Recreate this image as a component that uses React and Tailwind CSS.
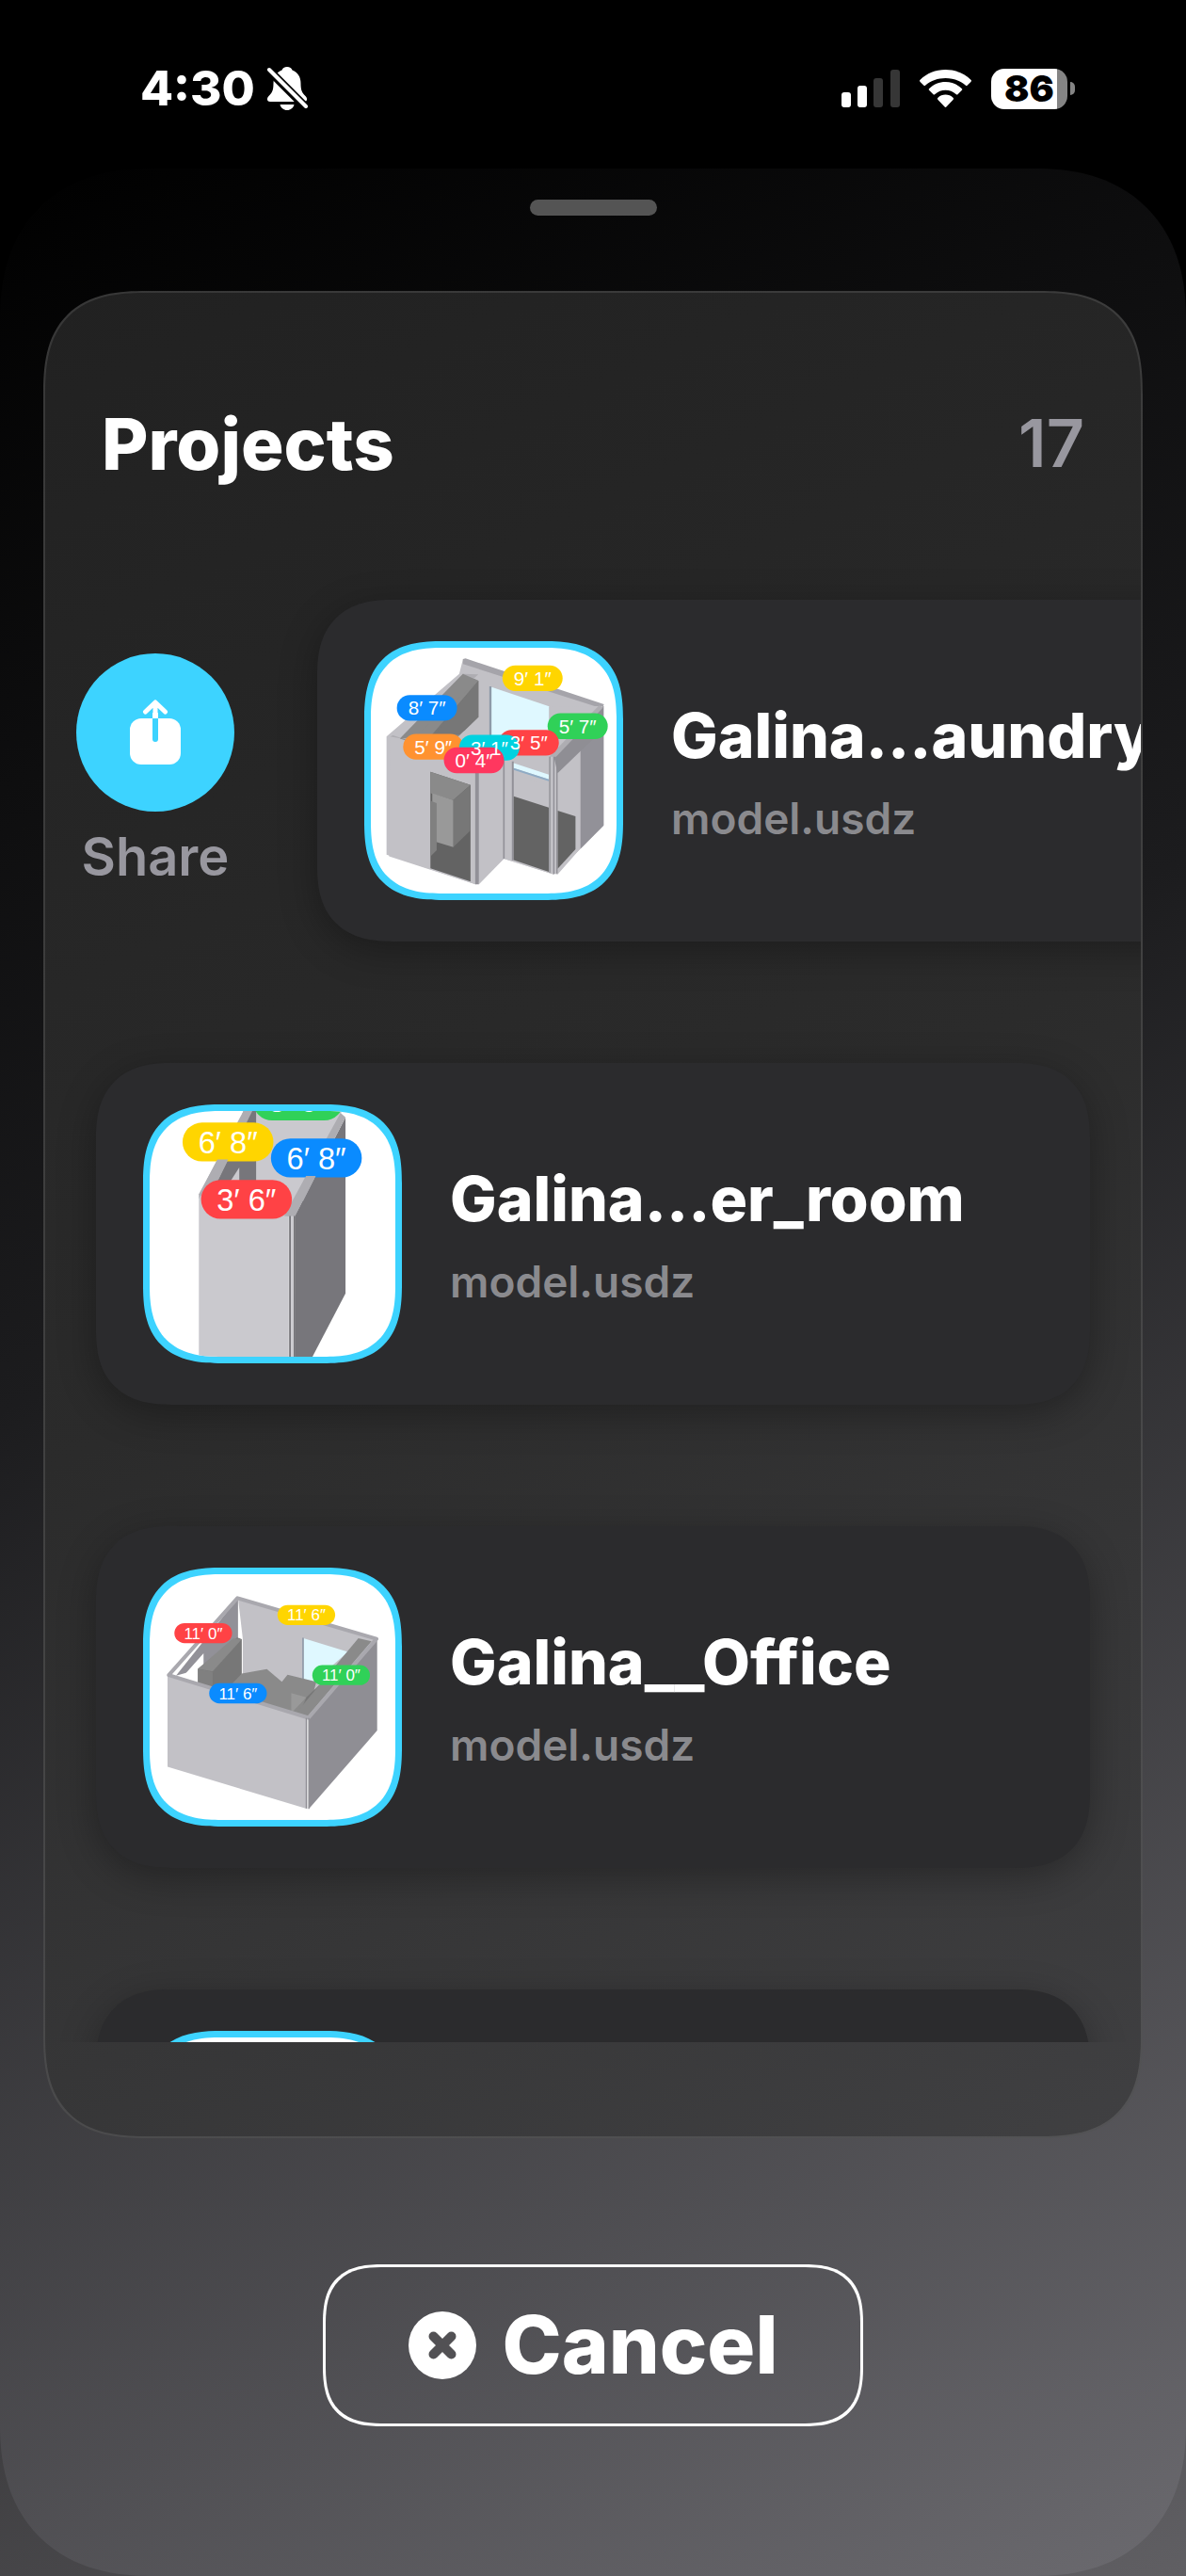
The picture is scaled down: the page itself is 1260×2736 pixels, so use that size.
import React from 'react';

const projects = [
  { name: 'Galina...aundry_room', file: 'model.usdz', Thumb: LaundryThumb, swiped: true },
  { name: 'Galina...er_room', file: 'model.usdz', Thumb: ShowerThumb },
  { name: 'Galina__Office', file: 'model.usdz', Thumb: OfficeThumb },
  { name: 'Galina__Room', file: 'model.usdz', Thumb: EmptyThumb },
];

export default function App() {
  return (
    <div className="min-h-screen bg-black font-['Inter',sans-serif] text-white">
      <div className="flex min-h-screen flex-col bg-linear-[155deg] from-black from-35% to-[#605f63]">
        <StatusBar />
        <main className="flex grow flex-col items-center rounded-[160px] bg-linear-[155deg] from-black via-[#1c1c1e] via-42% to-[#6b6a6f] px-[46px] pt-[33px] [corner-shape:superellipse(1.2)]">
          <div className="h-[17px] w-[135px] rounded-full bg-[#545454]" />
          <section className="mt-20 w-full rounded-[110px] border-2 border-white/10 bg-linear-[155deg] from-[#212121] via-[#2b2b2b] to-[#404042] bg-origin-border pb-[100px] [corner-shape:superellipse(1.4)]">
            <header className="flex items-center justify-between px-[60px] pt-28">
              <h1 className="text-[76px] leading-24 font-extrabold">Projects</h1>
              <span className="text-[70px] leading-24 font-semibold text-[#98979f]">17</span>
            </header>
            <ul className="mt-[60px] flex h-[1590px] flex-col gap-[129px] overflow-hidden pt-[58px]">
              {projects.map((p) => (
                <ProjectRow key={p.name} project={p} />
              ))}
            </ul>
          </section>
          <button className="mt-[134px] flex items-center gap-7 rounded-[64px] border-3 border-white px-[88px] py-[35px] text-[85px] leading-24 font-extrabold [corner-shape:superellipse(1.4)]">
            <CloseBadge />
            Cancel
          </button>
        </main>
      </div>
    </div>
  );
}

function ProjectRow({ project }) {
  const { name, file, Thumb, swiped } = project;
  return (
    <li className="flex shrink-0 items-center">
      {swiped && (
        <button className="ml-8 flex w-[170px] shrink-0 flex-col items-center gap-3 pt-0.5 text-[56px] leading-18 font-semibold text-[#98979f]">
          <span className="flex size-[168px] items-center justify-center rounded-full bg-[#3dd3ff]">
            <ShareIcon />
          </span>
          Share
        </button>
      )}
      <div
        className={`flex h-[363px] items-center gap-[51px] rounded-[80px] bg-[#2b2b2d] px-[50px] shadow-[0_10px_40px_rgba(0,0,0,0.3)] [corner-shape:superellipse(1.3)]
          ${swiped ? 'ml-[87px] w-[1056px] shrink-0' : 'mx-[54px] grow'}`}
      >
        <div className="size-[275px] shrink-0 overflow-hidden rounded-[84px] border-[7px] border-[#3dd3ff] bg-white [corner-shape:superellipse(1.4)]">
          <Thumb />
        </div>
        <div className="pt-1 whitespace-nowrap">
          <h2 className="text-[66px] leading-20 font-extrabold">{name}</h2>
          <p className="mt-4 text-[46px] leading-16 font-semibold text-[#8a8a8e]">{file}</p>
        </div>
      </div>
    </li>
  );
}

function StatusBar() {
  return (
    <div className="flex h-[179px] shrink-0 items-start justify-between bg-black pt-[62px] pr-[118px] pl-[149px]">
      <div className="flex h-16 items-center gap-3 text-[51px] font-extrabold">
        4:30
        <BellSlash />
      </div>
      <div className="flex h-16 items-center gap-[21px]">
        <svg className="h-10 w-[62px]" viewBox="0 0 62 40" fill="#fff">
          <rect x="0" y="24" width="10" height="16" rx="3" />
          <rect x="17" y="17" width="10" height="23" rx="3" />
          <rect x="34" y="9" width="10" height="31" rx="3" fill="#363636" />
          <rect x="52" y="0" width="10" height="40" rx="3" fill="#363636" />
        </svg>
        <svg className="h-10 w-[55px]" viewBox="0 0 55 40" fill="#fff">
          <path d="M27.5 0C17 0 7.500 4 .6 10.700a1.500 1.500 0 0 0 0 2.200l3.600 3.600a1.500 1.500 0 0 0 2.100 0C12 11.700 19.400 9 27.500 9s15.500 2.700 21.200 7.500a1.500 1.500 0 0 0 2.100 0l3.600-3.600a1.500 1.500 0 0 0 0-2.200C47.500 4 38 0 27.500 0Z" />
          <path d="M27.500 13c-6.600 0-12.600 2.700-17.200 6.900a1.500 1.500 0 0 0 0 2.200l4 4a1.500 1.500 0 0 0 2.100 0 16.500 16.500 0 0 1 22.200 0 1.500 1.500 0 0 0 2.100 0l4-4a1.500 1.500 0 0 0 0-2.200c-4.600-4.200-10.600-6.900-17.200-6.900Z" />
          <path d="M27.500 26.500c-3 0-5.900 1.200-8 3.200a1.500 1.500 0 0 0 0 2.200l6.900 7.400a1.500 1.500 0 0 0 2.200 0l6.900-7.400a1.500 1.500 0 0 0 0-2.200c-2.100-2-5-3.200-8-3.200Z" />
        </svg>
        <div className="flex items-center gap-[3px]">
          <div className="flex h-[43px] w-[81px] items-center justify-center rounded-[14px] bg-linear-to-r from-white from-87% to-[#848484] to-87% text-[39px] font-black text-black">
            86
          </div>
          <div className="h-[14px] w-[5px] rounded-r-full bg-[#848484]" />
        </div>
      </div>
    </div>
  );
}

function BellSlash() {
  return (
    <svg className="h-12 w-11" viewBox="0 0 44 48">
      <path
        d="M22 1c-2.800 0-4.800 1.500-5.500 3.500C10.500 7 7.500 12 7.500 18.500c0 7.500-1.500 10-5 13.500C0 34.500.5 38 4 38h36c3.500 0 4-3.500 1.500-6-3.500-3.500-5-6-5-13.500C36.500 12 33.500 7 27.500 4.500 26.800 2.500 24.800 1 22 1Z"
        fill="#fff"
      />
      <path d="M14.500 41h15c-.8 3.600-3.800 6-7.500 6s-6.700-2.400-7.500-6Z" fill="#fff" />
      <path d="M0 2l44 44" stroke="#000" strokeWidth="9" />
      <path d="M3 4l39 39" stroke="#fff" strokeWidth="4" strokeLinecap="round" />
    </svg>
  );
}

function ShareIcon() {
  return (
    <svg className="h-[70px] w-[54px]" viewBox="0 0 54 70" fill="none">
      <rect x="0" y="20" width="54" height="49" rx="12" fill="#fff" />
      <path d="M27 20v22" stroke="#3dd3ff" strokeWidth="6" strokeLinecap="round" />
      <path d="M24 14h6v6h-6z" fill="#fff" />
      <path d="M27 17V4M16.500 13 27 3l10.500 10" stroke="#fff" strokeWidth="5" strokeLinecap="round" strokeLinejoin="round" />
    </svg>
  );
}

function CloseBadge() {
  return (
    <svg className="size-[72px]" viewBox="0 0 72 72">
      <circle cx="36" cy="36" r="36" fill="#fff" />
      <path d="M26.500 26.500l19 19M45.500 26.500l-19 19" stroke="#525154" strokeWidth="10" strokeLinecap="round" />
    </svg>
  );
}

// dimension labels, each centred on x/y; the texts lie over all of the pills
function Tags({ w, h, size, items }) {
  return (
    <g>
      {items.map((t) => (
        <rect key={t.color} x={t.x - w / 2} y={t.y - h / 2} width={w} height={h} rx={h / 2} fill={t.color} />
      ))}
      {items.map((t) => (
        <text
          key={t.color}
          x={t.x}
          y={t.y + size * 0.36}
          textAnchor="middle"
          fontSize={size}
          fill="#fff"
          fontFamily="Liberation Sans, sans-serif"
        >
          {t.label}
        </text>
      ))}
    </g>
  );
}

function LaundryThumb() {
  return (
    <svg className="size-full" viewBox="72 82 784 784">
      <path d="M366 118l450 150v380l-75 75-85 82-160-50-90 82-284-95V365l232-200z" fill="#c2c1c6" />
      <path d="M366 118l8-2 442 146-6 14-444-142z" fill="#a5a4aa" />
      <path d="M366 165l49 22v116L300 415 165 372z" fill="#8a8a8a" />
      <path d="M415 187v116l-45 44-110 20z" fill="#777" />
      <path d="M133 365l10-4 40 14 232-208-49-2-200 206z" fill="#aeadb2" />
      <path d="M366 165l49 22-205 180-45 5z" fill="#8a8a8a" />
      <path d="M415 187v116l-60 57-80 0z" fill="#777" />
      <path d="M455 207l186 62v140H455z" fill="#dff8ff" />
      <path d="M450 205h7v160h-7z" fill="#8e9aa8" />
      <path d="M133 366l523 160v279l-160-50-90 82-276-90z" fill="#c2c1c6" />
      <path d="M262 478l128 42v308l-128-42z" fill="#636363" />
      <path d="M262 478l128 42-55 48-73-22z" fill="#8a8a8a" />
      <path d="M390 520v145l-55 53V568z" fill="#777" />
      <path d="M268 546l67 22v150l-67-20z" fill="#999" />
      <path d="M262 570l20 8v150l-20 20z" fill="#808080" />
      <path d="M405 470h12v367h-12z" fill="#929198" />
      <path d="M417 470l80-20v305l-80 82z" fill="#c2c1c6" />
      <path d="M494 430h5v325h-5zM522 445h6v315h-6z" fill="#929198" />
      <path d="M528 450l112 37v15l-112-36z" fill="#dff8ff" />
      <path d="M528 466l112 36v6l-112-36z" fill="#8eabc5" />
      <path d="M528 556l112 36v205l-112-38z" fill="#636363" />
      <path d="M641 270l171-2v380l-72 75-72 82-27-5z" fill="#c2c1c6" />
      <path d="M741 355l73-85v380l-73 73z" fill="#929198" />
      <path d="M656 430l158-162v75L741 412l-73 70z" fill="#8f8e94" />
      <path d="M641 430l160-165 12 8-150 157z" fill="#aeadb2" />
      <path d="M668 602l57 18v105l-57 62z" fill="#636363" />
      <path d="M641 430h4v370h-4zM654 430h4v374h-4zM664 430h4v372h-4z" fill="#8f8e94" />
      <Tags
        w={192}
        h={82}
        size={62}
        items={[
          { x: 588, y: 179, color: '#ffd500', label: '9′ 1″' },
          { x: 251, y: 274, color: '#0a8bff', label: '8′ 7″' },
          { x: 732, y: 332, color: '#30d158', label: '5′ 7″' },
          { x: 576, y: 385, color: '#ff4245', label: '3′ 5″' },
          { x: 271, y: 398, color: '#ff9230', label: '5′ 9″' },
          { x: 450, y: 401, color: '#00d2e0', label: '3′ 1″' },
          { x: 401, y: 441, color: '#ff375f', label: '0′ 4″' },
        ]}
      />
    </svg>
  );
}

function ShowerThumb() {
  return (
    <svg className="size-full" viewBox="86 90 784 784">
      <path d="M426 87h275L545 425H426z" fill="#cac9ce" />
      <path d="M387 87h39v230H290z" fill="#77767b" />
      <path d="M372 270v47h-30z" fill="#cac9ce" />
      <path d="M387 87h28L280 360l-37 10v-15z" fill="#aeadb2" />
      <path d="M243 368l42-50h245v559H243z" fill="#cac9ce" />
      <path d="M549 425l162-315v562L604 877h-55z" fill="#77767b" />
      <path d="M695 96l16 14-162 317-34-2z" fill="#aeadb2" />
      <path d="M531 425h6v452h-6zM545 425h5v452h-5z" fill="#77767b" />
      <path d="M537 425h8v452h-8z" fill="#cac9ce" />
      <Tags
        w={290}
        h={124}
        size={98}
        items={[
          { x: 560, y: 58, color: '#30d158', label: '3′ 6″' },
          { x: 336, y: 189, color: '#ffd500', label: '6′ 8″' },
          { x: 618, y: 240, color: '#0a8bff', label: '6′ 8″' },
        ]}
      />
      <path d="M302 245h34l-30 62h-36zM585 297h31l-40 80h-31z" fill="#aeadb2" />
      <Tags w={290} h={124} size={98} items={[{ x: 395, y: 372, color: '#ff4245', label: '3′ 6″' }]} />
    </svg>
  );
}

function OfficeThumb() {
  return (
    <svg className="size-full" viewBox="86 96 784 784">
      <path d="M368 172l440 130-215 250-210-70V300z" fill="#c2c1c6" />
      <path d="M368 172v130L240 400l-70 20z" fill="#929198" />
      <path d="M258 348v60l-18 34-52-15z" fill="#fff" />
      <path d="M240 398l125-100 15 5v150l-90 10-50-20z" fill="#777" />
      <path d="M240 398l112-97 28 2-93 103z" fill="#8a8a8a" />
      <path d="M240 398l47 10v50l-47-16z" fill="#808080" />
      <path d="M577 300l142 44-110 95-32-8z" fill="#dff8ff" />
      <path d="M573 299h5v133h-5z" fill="#8e9aa8" />
      <path d="M340 455l40-42 80-14 48 40 18-22 92 22-30 110-240-50z" fill="#8a8a8a" />
      <path d="M538 475l48 14-48 50z" fill="#999" />
      <path d="M586 489l42-40-5 30-60 66z" fill="#777" />
      <path d="M752 300l42 10-205 240-35-12z" fill="#8a8a8a" />
      <path d="M143 418l446 137v290L143 710z" fill="#c2c1c6" />
      <path d="M594 555l218-250v290L594 845z" fill="#8f8e94" />
      <path d="M147 418L366 172l444 130-217 252z" fill="none" stroke="#a9a8ae" strokeWidth="12" strokeLinejoin="round" />
      <path d="M584 555h4v288h-4zM592 555h4v290h-4z" fill="#8f8e94" />
      <Tags
        w={184}
        h={64}
        size={51}
        items={[
          { x: 586, y: 226, color: '#ffd500', label: '11′ 6″' },
          { x: 257, y: 284, color: '#ff4245', label: '11′ 0″' },
          { x: 697, y: 418, color: '#30d158', label: '11′ 0″' },
          { x: 368, y: 476, color: '#0a8bff', label: '11′ 6″' },
        ]}
      />
    </svg>
  );
}

function EmptyThumb() {
  return <svg className="size-full" viewBox="0 0 10 10" />;
}
